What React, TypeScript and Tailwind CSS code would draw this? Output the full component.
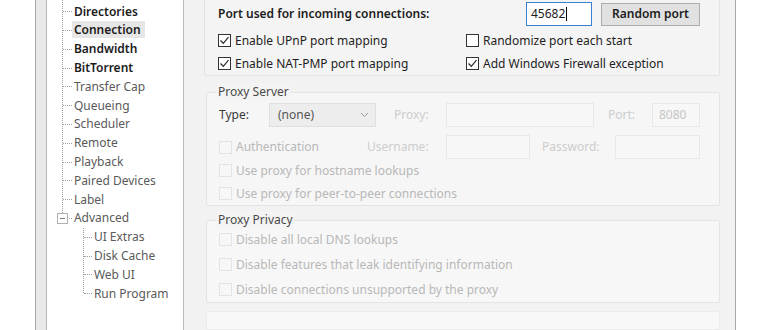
import React from "react";

const F = { fontFamily: '"Noto Sans", "Open Sans", sans-serif' };

function Check({ checked, disabled }: { checked?: boolean; disabled?: boolean }) {
  return (
    <span
      className={
        "inline-flex items-center justify-center w-[13px] h-[13px] border shrink-0 " +
        (disabled ? "border-[#e3e3e3] bg-[#f7f7f7]" : "border-[#333] bg-white")
      }
    >
      {checked && (
        <svg width="11" height="11" viewBox="0 0 11 11">
          <path d="M1.5 5.5 L4.3 8.3 L9.5 2.2" fill="none" stroke="#333" strokeWidth="1.3" />
        </svg>
      )}
    </span>
  );
}

function CheckRow({ label, checked, disabled, className = "" }: { label: string; checked?: boolean; disabled?: boolean; className?: string }) {
  return (
    <div className={"flex items-center gap-[4px] " + className}>
      <Check checked={checked} disabled={disabled} />
      <span className={disabled ? "text-[#b8b8b8]" : "text-[#1e1e1e]"}>{label}</span>
    </div>
  );
}

const tree: { label: string; level: number; strong?: boolean; selected?: boolean }[] = [
  { label: "General", level: 0, strong: true },
  { label: "Directories", level: 0, strong: true },
  { label: "Connection", level: 0, strong: true, selected: true },
  { label: "Bandwidth", level: 0, strong: true },
  { label: "BitTorrent", level: 0, strong: true },
  { label: "Transfer Cap", level: 0 },
  { label: "Queueing", level: 0 },
  { label: "Scheduler", level: 0 },
  { label: "Remote", level: 0 },
  { label: "Playback", level: 0 },
  { label: "Paired Devices", level: 0 },
  { label: "Label", level: 0 },
  { label: "Advanced", level: 0 },
  { label: "UI Extras", level: 1 },
  { label: "Disk Cache", level: 1 },
  { label: "Web UI", level: 1 },
  { label: "Run Program", level: 1 },
];

function Tree() {
  return (
    <div className="relative w-[140px] h-full bg-white border-x border-[#b9b9b9] overflow-hidden">
      <div className="relative mt-[-17px]">
        <div className="absolute left-[15px] top-0 h-[236px] border-l border-dotted border-[#a0a0a0]" />
        <div className="absolute left-[36px] top-[245px] h-[65px] border-l border-dotted border-[#a0a0a0]" />
        {tree.map((t) => (
          <div key={t.label} className="relative flex items-center h-[18.8px]">
            <div
              className={
                "absolute top-1/2 border-t border-dotted border-[#a0a0a0] " +
                (t.level === 0 ? "left-[16px] w-[9px]" : "left-[37px] w-[8px]")
              }
            />
            {t.label === "Advanced" && (
              <div className="absolute left-[10px] top-[4px] w-[11px] h-[11px] border border-[#b0b0b0] bg-white flex items-center justify-center">
                <div className="w-[5px] border-t border-[#777]" />
              </div>
            )}
            <span
              className={
                "whitespace-nowrap leading-[17px] px-[2px] " +
                (t.level === 0 ? "ml-[25px] " : "ml-[45px] ") +
                (t.strong ? "font-semibold text-[#1c1c1c] " : "text-[#5a5a5a] ") +
                (t.selected ? "bg-[#e6e6e6] pr-[4px]" : "")
              }
            >
              {t.label}
            </span>
          </div>
        ))}
      </div>
    </div>
  );
}

function Group({ title, className = "", children }: { title?: string; className?: string; children: React.ReactNode }) {
  return (
    <div className={"relative border border-[#e4e4e4] rounded-[2px] " + className}>
      {title && (
        <span className="absolute left-[10px] top-[-10px] px-[1px] bg-[#f4f4f4] text-[#4a4a4a] leading-[18px]">{title}</span>
      )}
      {children}
    </div>
  );
}

function Field({ className = "", children }: { className?: string; children?: React.ReactNode }) {
  return (
    <div className={"h-[24px] border border-[#e8e8e8] bg-[#f7f7f7] flex items-center px-[6px] text-[#c4c4c4] " + className}>
      {children}
    </div>
  );
}

export default function App() {
  return (
    <div className="w-[770px] h-[330px] bg-white overflow-hidden text-[12px]" style={F}>
      <div className="ml-[35px] w-[701px] h-full flex bg-[#f2f2f2] border-x border-[#a8a8a8]">
        <div className="w-[10px] bg-[#e9e9e9]" />
        <Tree />
        <div className="w-[20px]" />
        <div className="flex-1 flex flex-col pr-[15px]">
          <Group className="mt-[-12px] h-[88px] pl-[13px] pr-[19px] bg-[#f4f4f4]">
            <div className="mt-[13px] flex items-center h-[24px]">
              <span className="font-semibold text-[#1c1c1c]">Port used for incoming connections:</span>
              <div className="ml-auto w-[66px] h-[24px] bg-white border border-[#3c7fd0] flex items-center px-[4px] text-[#1c1c1c]">
                45682<span className="w-px h-[14px] bg-black ml-[1px]" />
              </div>
              <div className="ml-[9px] w-[99px] h-[23px] bg-[#e1e1e1] border border-[#adadad] flex items-center justify-center font-semibold text-[#1c1c1c]">
                Random port
              </div>
            </div>
            <div className="flex mt-[3px] h-[23px]">
              <CheckRow label="Enable UPnP port mapping" checked className="w-[248px]" />
              <CheckRow label="Randomize port each start" />
            </div>
            <div className="flex h-[23px]">
              <CheckRow label="Enable NAT-PMP port mapping" checked className="w-[248px]" />
              <CheckRow label="Add Windows Firewall exception" checked />
            </div>
          </Group>

          <Group title="Proxy Server" className="mt-[16px] ml-[2px] h-[116px] pl-[12px] pr-[19px] bg-[#f6f6f6]">
            <div className="mt-[10px] flex items-center h-[24px]">
              <span className="w-[50px] text-[#3a3a3a]">Type:</span>
              <div className="w-[107px] h-[24px] bg-[#ededed] border border-[#e0e0e0] flex items-center pl-[8px] pr-[6px] text-[#555]">
                (none)
                <svg className="ml-auto" width="9" height="6" viewBox="0 0 9 6">
                  <path d="M1 1 L4.5 4.5 L8 1" fill="none" stroke="#9a9a9a" strokeWidth="1" />
                </svg>
              </div>
              <span className="ml-[18px] w-[52px] text-[#cdcdcd]">Proxy:</span>
              <Field className="w-[148px]" />
              <span className="ml-[14px] w-[44px] text-[#cdcdcd]">Port:</span>
              <Field className="w-[48px]">8080</Field>
            </div>
            <div className="mt-[8px] flex items-center h-[24px]">
              <CheckRow label="Authentication" disabled className="w-[148px]" />
              <span className="w-[79px] text-[#cdcdcd]">Username:</span>
              <Field className="w-[84px]" />
              <span className="ml-[12px] w-[73px] text-[#cdcdcd]">Password:</span>
              <Field className="w-[85px]" />
            </div>
            <CheckRow label="Use proxy for hostname lookups" disabled className="h-[23px]" />
            <CheckRow label="Use proxy for peer-to-peer connections" disabled className="h-[23px]" />
          </Group>

          <Group title="Proxy Privacy" className="mt-[14px] ml-[2px] h-[84px] pl-[12px] pr-[19px] bg-[#f7f7f7]">
            <CheckRow label="Disable all local DNS lookups" disabled className="mt-[6px] h-[25px]" />
            <CheckRow label="Disable features that leak identifying information" disabled className="h-[25px]" />
            <CheckRow label="Disable connections unsupported by the proxy" disabled className="h-[25px]" />
          </Group>

          <Group className="mt-[8px] ml-[2px] h-[40px] border-[#ececec] bg-[#f8f8f8]">
            <div />
          </Group>
        </div>
      </div>
    </div>
  );
}
